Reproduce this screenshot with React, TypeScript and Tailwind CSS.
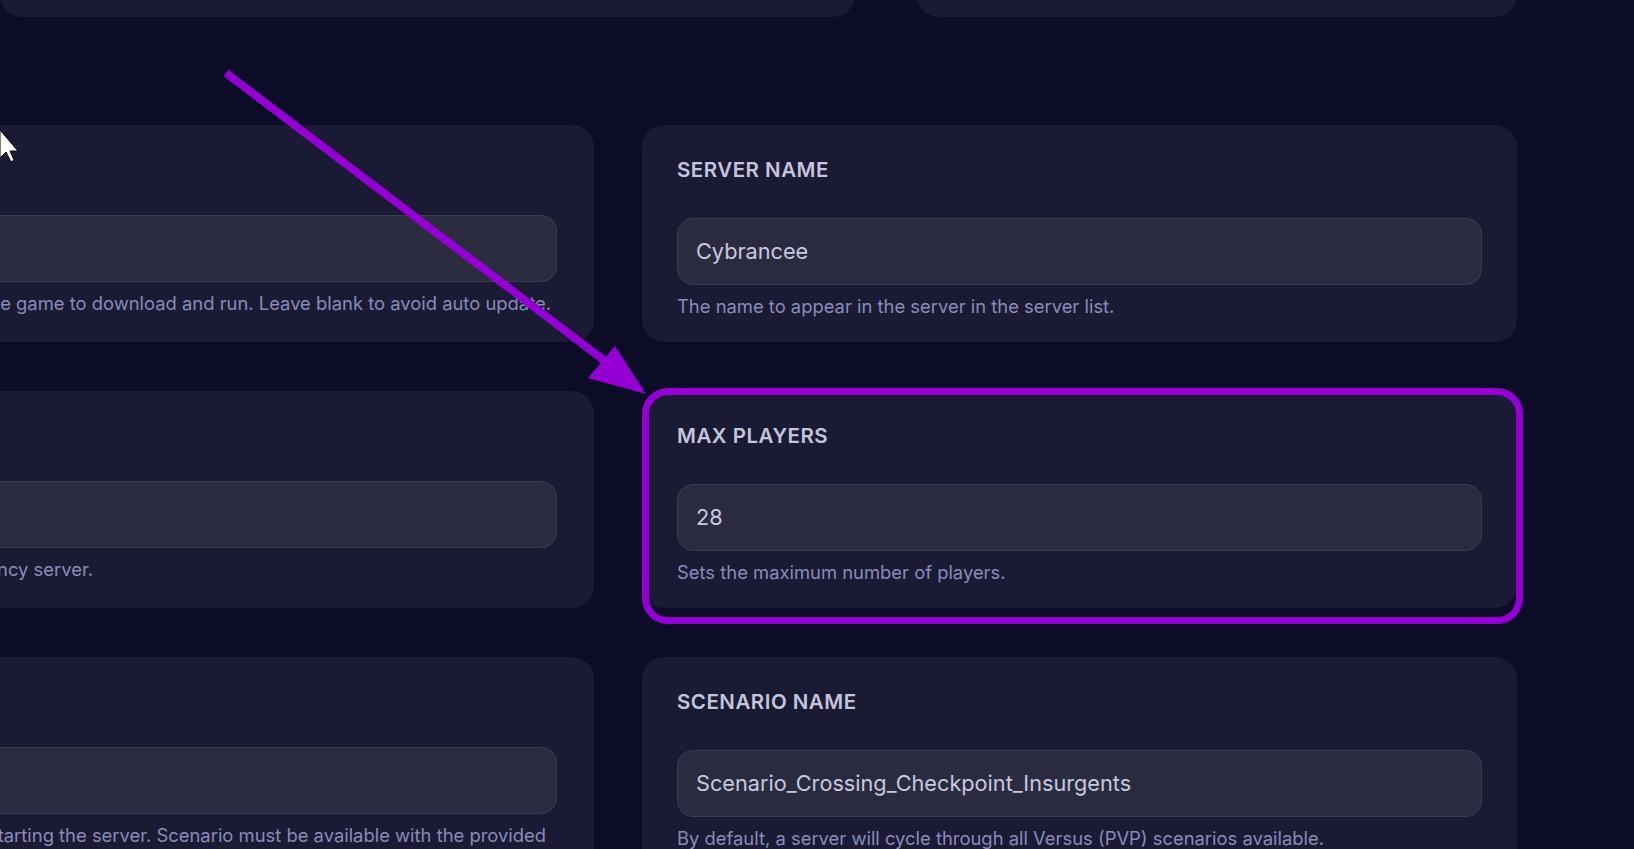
export default function App() {
  const rows = [
    {
      left: "The version of the game to download and run. Leave blank to avoid auto update.",
      leftPr: "pr-[43px]",
      label: "SERVER NAME",
      value: "Cybrancee",
      help: "The name to appear in the server in the server list.",
    },
    {
      left: "Enables the low latency server.",
      leftPr: "pr-[501px]",
      label: "MAX PLAYERS",
      value: "28",
      help: "Sets the maximum number of players.",
    },
    {
      left: "Scenario to load when starting the server. Scenario must be available with the provided",
      leftPr: "pr-[48px]",
      label: "SCENARIO NAME",
      value: "Scenario_Crossing_Checkpoint_Insurgents",
      help: "By default, a server will cycle through all Versus (PVP) scenarios available.",
    },
  ];
  return (
    <div
      className="relative w-[1634px] h-[849px] overflow-hidden bg-[#0c0c28]"
      style={{ fontFamily: "Inter, 'Noto Sans', sans-serif" }}
    >
      <div className="flex gap-[62px] -mt-[40px] h-[57px]">
        <div className="w-[855px] rounded-[22px] bg-[#1a1a34]" />
        <div className="w-[600px] rounded-[22px] bg-[#1a1a34]" />
      </div>
      <div className="flex flex-col gap-[49px] mt-[108px]">
        {rows.map((r) => (
          <div key={r.label} className="flex gap-[48px]">
            <div className="w-[594px] h-[217px] shrink-0 rounded-r-[22px] bg-[#1a1a34] overflow-hidden pt-[90px]">
              <div className="h-[67px] mr-[37px] rounded-r-[16px] bg-[#2b2b40] border border-[#3a3a52] border-l-0" />
              <div className={`flex justify-end whitespace-nowrap mt-[8px] text-[18.4px] text-[#8a8ab8] ${r.leftPr}`}>
                {r.left}
              </div>
            </div>
            <div className="w-[875px] h-[217px] rounded-[22px] bg-[#1a1a34] px-[35px] pt-[30px]">
              <div className="text-[20.5px] font-semibold text-[#c4c4dc] tracking-[0.5px]">{r.label}</div>
              <div className="mt-[32px] h-[67px] rounded-[16px] bg-[#2b2b40] border border-[#3a3a52] flex items-center px-[18px] text-[21.7px] text-[#c8c8de]">
                {r.value}
              </div>
              <div className="mt-[8px] text-[18.4px] text-[#8a8ab8]">{r.help}</div>
            </div>
          </div>
        ))}
      </div>
      <div className="absolute left-[642px] top-[388px] w-[881px] h-[236px] rounded-[26px] border-[7px] border-[#9400d3]" />
      <svg className="absolute left-0 top-0" width="1634" height="849">
        <line x1="226" y1="73" x2="622" y2="374" stroke="#9400d3" strokeWidth="8" />
        <polygon points="646,394 588,378 615,346" fill="#9400d3" />
        <polygon points="0,130 0,158 6,152 11,162 14,160 10,151 18,151" fill="#fff" stroke="#000" strokeWidth="1" />
      </svg>
    </div>
  );
}
